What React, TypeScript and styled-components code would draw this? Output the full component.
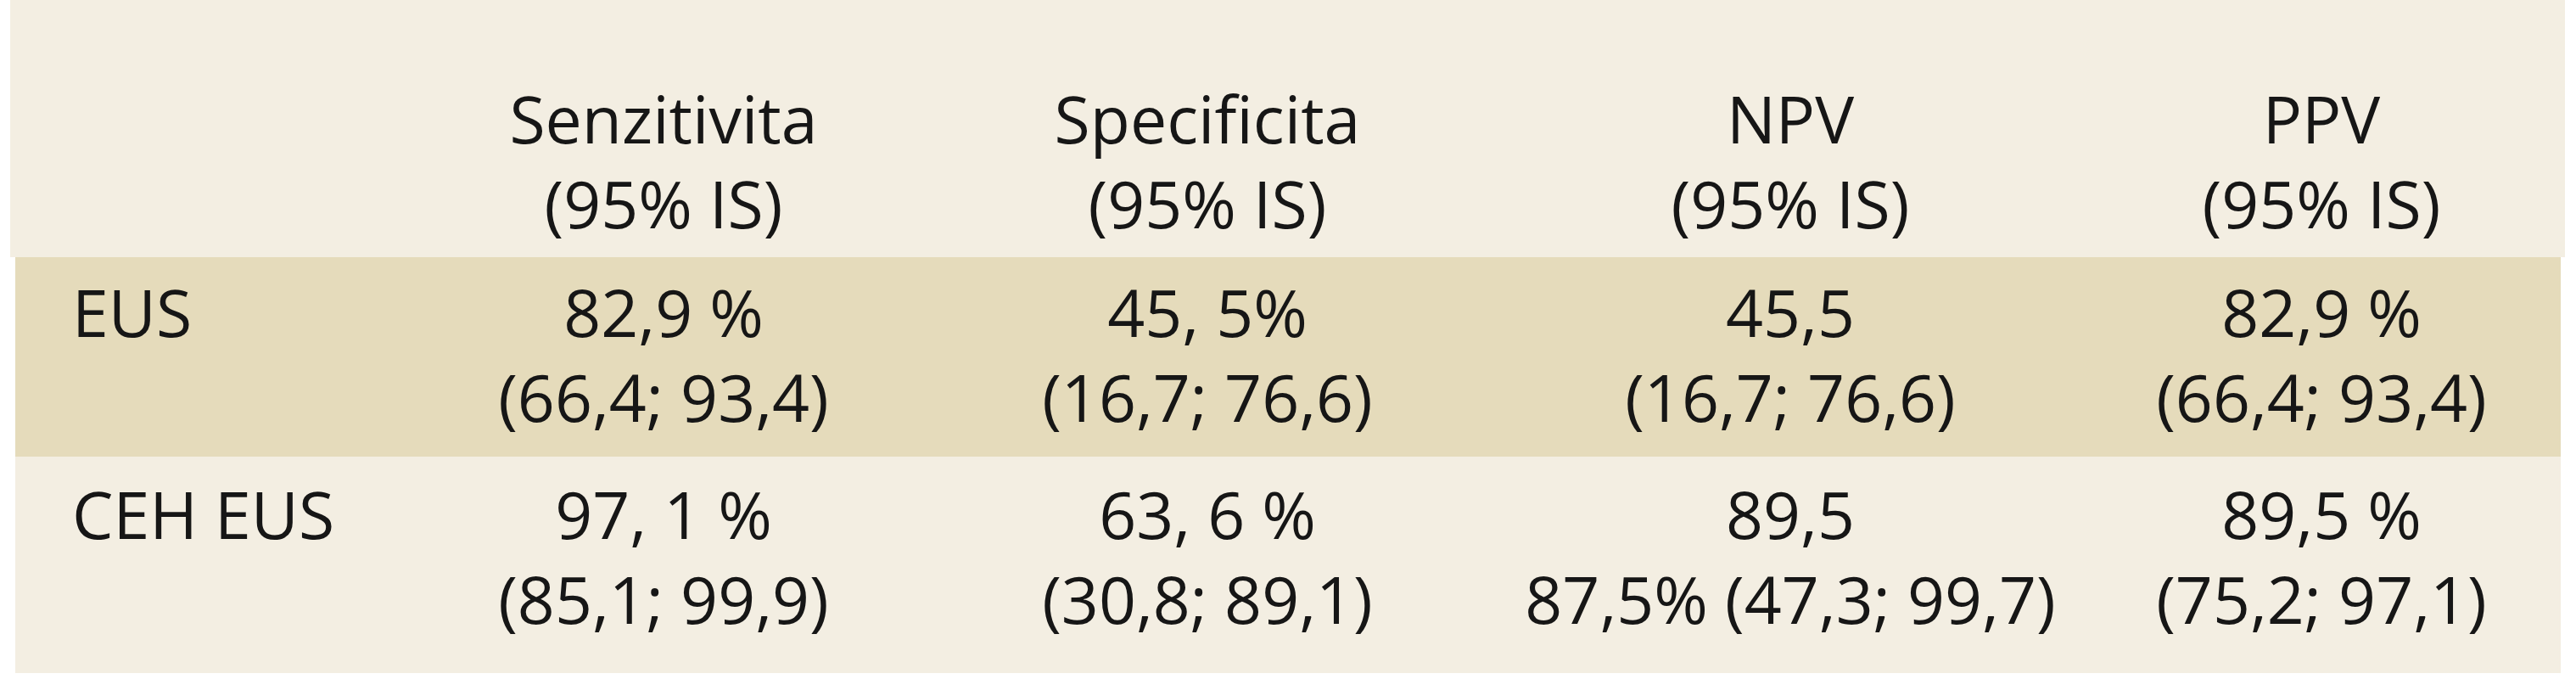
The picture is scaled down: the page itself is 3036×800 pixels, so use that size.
import React from 'react';
import styled, { createGlobalStyle } from 'styled-components';

const cream = '#F3EEE2';
const sand = '#E5DBBB';
const ink = '#161616';

const GlobalStyle = createGlobalStyle`
  html, body {
    margin: 0;
    padding: 0;
    background: #ffffff;
  }
  body {
    font-family: 'Open Sans', 'Noto Sans', sans-serif;
  }
`;

type Cell = [string, string];
type Row = { label: string; cells: Cell[] };

const headers: Cell[] = [
  ['Senzitivita', '(95% IS)'],
  ['Specificita', '(95% IS)'],
  ['NPV', '(95% IS)'],
  ['PPV', '(95% IS)'],
];

const rows: Row[] = [
  {
    label: 'EUS',
    cells: [
      ['82,9 %', '(66,4; 93,4)'],
      ['45, 5%', '(16,7; 76,6)'],
      ['45,5', '(16,7; 76,6)'],
      ['82,9 %', '(66,4; 93,4)'],
    ],
  },
  {
    label: 'CEH EUS',
    cells: [
      ['97, 1 %', '(85,1; 99,9)'],
      ['63, 6 %', '(30,8; 89,1)'],
      ['89,5', '87,5% (47,3; 99,7)'],
      ['89,5 %', '(75,2; 97,1)'],
    ],
  },
];

const App = () => (
  <>
    <GlobalStyle />
    <Table>
      <HeadRow>
        <Label />
        {headers.map(([top, bottom]) => (
          <Value key={top}>
            <Line>{top}</Line>
            <Line>{bottom}</Line>
          </Value>
        ))}
      </HeadRow>
      {rows.map((row, i) => (
        <BodyRow key={row.label} $shaded={i % 2 === 0} $last={i === rows.length - 1}>
          <Label>{row.label}</Label>
          {row.cells.map(([top, bottom], j) => (
            <Value key={j}>
              <Line>{top}</Line>
              <Line>{bottom}</Line>
            </Value>
          ))}
        </BodyRow>
      ))}
    </Table>
  </>
);

const Table = styled.div`
  margin-left: 18px;
  width: 3000px;
  background-color: ${cream};
  color: ${ink};
  font-size: 77px;
  line-height: 100px;
`;

const RowBase = styled.div`
  display: grid;
  grid-template-columns: 437px 654px 628px 746px 506px 1fr;
  align-items: start;
`;

const HeadRow = styled(RowBase)`
  padding: 90px 0 13px;
  background-color: ${cream};
  box-shadow: -6px 0 0 ${cream}, 5px 0 0 ${cream};
`;

const BodyRow = styled(RowBase)<{ $shaded?: boolean; $last?: boolean }>`
  padding: ${({ $last }) => ($last ? '18px 0 37px' : '15px 0 20px')};
  background-color: ${({ $shaded }) => ($shaded ? sand : cream)};
`;

const Label = styled.div`
  padding-left: 67px;
  white-space: nowrap;
`;

const Value = styled.div`
  display: flex;
  flex-direction: column;
  align-items: center;
  text-align: center;
`;

const Line = styled.span`
  white-space: pre;
`;

export default App;
